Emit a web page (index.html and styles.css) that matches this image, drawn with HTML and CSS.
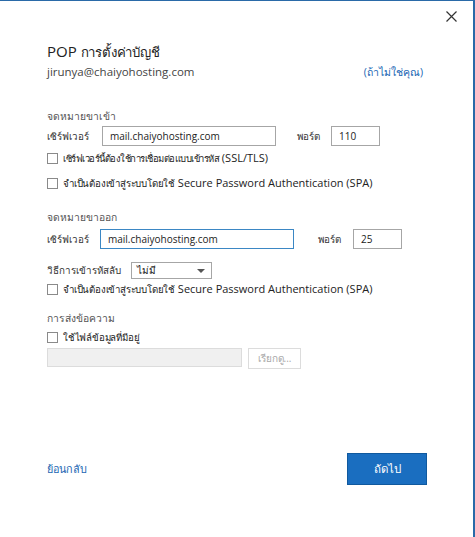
FILE: index.html
```html
<!DOCTYPE html>
<html lang="th">
  <head>
    <meta charset="UTF-8" />
    <title>POP การตั้งค่าบัญชี</title>
    <link rel="stylesheet" href="styles.css">
  </head>
  <body>
    <div class="dialog">
      <div class="topbar">
        <span class="close" title="ปิด">
          <svg width="11" height="11" viewBox="0 0 11 11">
            <path d="M0.5 0.5 L10.5 10.5 M10.5 0.5 L0.5 10.5" stroke="#333" stroke-width="1.2" />
          </svg>
        </span>
      </div>

      <div class="content">
        <h1 class="title">POP <span class="th">การตั้งค่าบัญชี</span></h1>
        <div class="account">
          <span class="email">jirunya@chaiyohosting.com</span>
          <a class="link notyou">(ถ้าไม่ใช่คุณ)</a>
        </div>

        <div class="section-label incoming-label">จดหมายขาเข้า</div>
        <div class="server-row">
          <span class="field-label">เซิร์ฟเวอร์</span>
          <input class="text in-server" type="text" value="mail.chaiyohosting.com" />
          <span class="field-label port-label">พอร์ต</span>
          <input class="text port" type="text" value="110" />
        </div>
        <label class="check first">
          <span class="box"></span>
          <span><span class="th tight">เซิร์ฟเวอร์นี้ต้องใช้การเชื่อมต่อแบบเข้ารหัส</span> (SSL/TLS)</span>
        </label>
        <label class="check second">
          <span class="box"></span>
          <span><span class="th">จำเป็นต้องเข้าสู่ระบบโดยใช้</span> Secure Password Authentication (SPA)</span>
        </label>

        <div class="section-label outgoing-label">จดหมายขาออก</div>
        <div class="server-row out-row">
          <span class="field-label">เซิร์ฟเวอร์</span>
          <input class="text out-server focused" type="text" value="mail.chaiyohosting.com" />
          <span class="field-label port-label out-port-label">พอร์ต</span>
          <input class="text port out-port" type="text" value="25" />
        </div>
        <div class="enc-row">
          <span class="field-label">วิธีการเข้ารหัสลับ</span>
          <div class="dropdown">
            <span>ไม่มี</span>
            <span class="arrow"></span>
          </div>
        </div>
        <label class="check enc-check">
          <span class="box"></span>
          <span><span class="th">จำเป็นต้องเข้าสู่ระบบโดยใช้</span> Secure Password Authentication (SPA)</span>
        </label>

        <div class="section-label send-label">การส่งข้อความ</div>
        <label class="check send-check">
          <span class="box"></span>
          <span class="th">ใช้ไฟล์ข้อมูลที่มีอยู่</span>
        </label>
        <div class="file-row">
          <div class="file-path"></div>
          <button class="browse" disabled>เรียกดู...</button>
        </div>

        <div class="footer">
          <a class="link back">ย้อนกลับ</a>
          <button class="next">ถัดไป</button>
        </div>
      </div>
    </div>
  </body>
</html>
```

FILE: styles.css
```css
html,
body {
  margin: 0;
  padding: 0;
  background: #fff;
}
body {
  font-family: "Open Sans", "Noto Sans", sans-serif;
  color: #222;
}
.dialog {
  width: 473px;
  height: 536px;
  border-top: 1px solid #2a6aa8;
  border-right: 2px solid #2a6aa8;
  background: #fff;
}
.topbar {
  height: 29px;
  display: flex;
  justify-content: flex-end;
  align-items: center;
  padding-right: 16px;
}
.close {
  display: flex;
  margin-top: 1px;
}
.content {
  padding: 0 50px 0 47px;
}
.th {
  font-size: 0.88em;
  letter-spacing: -0.2px;
}
.th.tight {
  font-size: 0.86em;
  letter-spacing: -0.5px;
}
.title {
  margin: 10px 0 0 0;
  font-size: 15px;
  font-weight: normal;
  line-height: 22px;
  color: #222;
}
.account {
  display: flex;
  justify-content: space-between;
  align-items: center;
  height: 18px;
  margin-top: -1px;
}
.email {
  font-size: 11.5px;
  color: #444;
}
.link {
  color: #1a66b3;
  font-size: 10.5px;
  cursor: pointer;
}
.notyou {
  margin-top: 3px;
}
.section-label {
  font-size: 10.3px;
  line-height: 16px;
  color: #555;
}
.incoming-label {
  margin-top: 28px;
}
.outgoing-label {
  margin-top: 16px;
}
.send-label {
  margin-top: 11px;
}
.server-row {
  display: flex;
  align-items: center;
  height: 20px;
  margin-top: 2px;
}
.out-row {
  margin-top: 4px;
}
.field-label {
  font-size: 9.8px;
  color: #333;
}
.text {
  box-sizing: border-box;
  height: 20px;
  border: 1px solid #a6a6a6;
  padding: 0 7px;
  font-family: inherit;
  font-size: 10px;
  color: #222;
  outline: none;
}
.in-server {
  width: 174px;
  margin-left: 13px;
}
.out-server {
  width: 194px;
  margin-left: 11px;
}
.focused {
  border-color: #3b87c4;
}
.port-label {
  margin-left: 21px;
}
.out-port-label {
  margin-left: 24px;
}
.port {
  width: 49px;
  margin-left: 11px;
}
.out-port {
  margin-left: 12px;
}
.check {
  display: flex;
  align-items: center;
  height: 20px;
  font-size: 11px;
  color: #222;
}
.box {
  box-sizing: border-box;
  width: 11px;
  height: 11px;
  border: 1px solid #8a8a8a;
  background: #fff;
  margin-right: 5px;
}
.first {
  margin-top: 2px;
}
.second {
  margin-top: 5px;
}
.enc-row {
  display: flex;
  align-items: center;
  height: 19px;
  margin-top: 12px;
}
.dropdown {
  box-sizing: border-box;
  width: 81px;
  height: 17px;
  margin-left: 10px;
  border: 1px solid #a6a6a6;
  display: flex;
  align-items: center;
  justify-content: space-between;
  padding: 0 6px 0 5px;
  font-size: 10px;
}
.arrow {
  width: 0;
  height: 0;
  border-left: 4px solid transparent;
  border-right: 4px solid transparent;
  border-top: 4px solid #555;
}
.enc-check {
  margin-top: -1px;
}
.send-check {
  margin-top: 1px;
}
.file-row {
  display: flex;
  gap: 6px;
  margin-top: 1px;
}
.file-path {
  box-sizing: border-box;
  width: 195px;
  height: 19px;
  border: 1px solid #dcdcdc;
  background: #f0f0f0;
}
.browse {
  box-sizing: border-box;
  width: 53px;
  height: 21px;
  border: 1px solid #dcdcdc;
  background: #fff;
  color: #a8a8a8;
  font-family: inherit;
  font-size: 10px;
  padding: 0;
}
.footer {
  display: flex;
  justify-content: space-between;
  align-items: center;
  margin-top: 84px;
}
.back {
  font-size: 10.8px;
}
.next {
  box-sizing: border-box;
  width: 80px;
  height: 32px;
  margin-right: -4px;
  background: #1a6ec0;
  border: 1px solid #10599e;
  color: #fff;
  font-family: inherit;
  font-size: 11.5px;
  cursor: pointer;
}
```
